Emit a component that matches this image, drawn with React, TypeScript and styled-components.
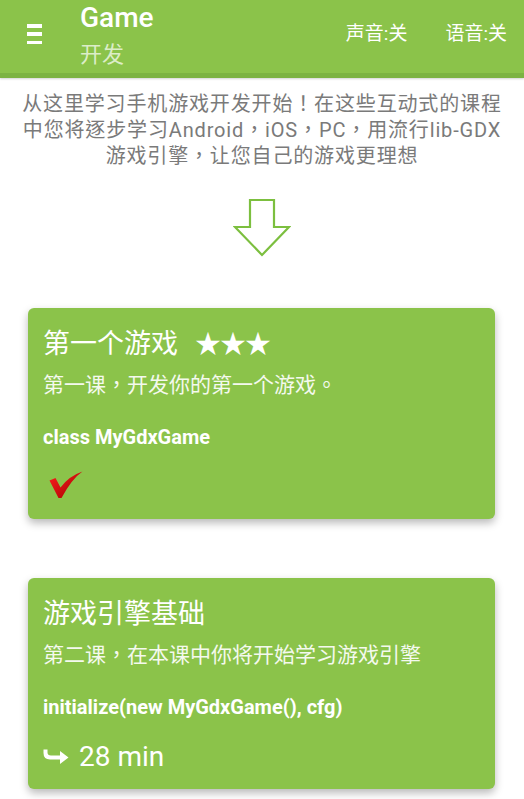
import React from "react";
import styled, { createGlobalStyle } from "styled-components";

const Global = createGlobalStyle`
  html, body { margin: 0; padding: 0; background: #ffffff; }
  body { font-family: Roboto, "Noto Sans CJK TC", sans-serif; }
  * { box-sizing: border-box; }
`;

const GREEN = "#8BC34A";

const Page = styled.div`
  width: 524px;
  min-height: 799px;
  background: #fff;
  overflow: hidden;
`;

const Header = styled.header`
  height: 78px;
  background: ${GREEN};
  border-bottom: 5px solid #7cb342;
  box-shadow: 0 1px 2px rgba(0, 0, 0, 0.18);
  display: flex;
  align-items: flex-start;
  padding-left: 27px;
  padding-right: 17px;
`;

const Burger = styled.div`
  width: 15px;
  height: 20px;
  margin-top: 24px;
  display: flex;
  flex-direction: column;
  justify-content: space-between;
`;

const BurgerBar = styled.span`
  display: block;
  height: 3.5px;
  background: #fff;
`;

const TitleBlock = styled.div`
  margin-left: 38px;
  display: flex;
  flex-direction: column;
  padding-top: 2px;
`;

const AppTitle = styled.div`
  font-family: Roboto, sans-serif;
  font-weight: 500;
  font-size: 28px;
  line-height: 32px;
  color: #fff;
`;

const AppSub = styled.div`
  font-family: "Noto Sans CJK SC", sans-serif;
  font-size: 22px;
  line-height: 28px;
  margin-top: 4px;
  color: #dcedc8;
`;

const HeaderActions = styled.div`
  margin-left: auto;
  display: flex;
  gap: 38px;
  margin-top: 21px;
`;

const HeaderAction = styled.span`
  font-family: Roboto, "Noto Sans CJK SC", sans-serif;
  font-size: 19px;
  line-height: 26px;
  color: #fff;
`;

const Intro = styled.p`
  margin: 13px 0 0;
  text-align: center;
  color: #7a7a7a;
  font-family: Roboto, "Noto Sans CJK TC", sans-serif;
  font-size: 20px;
  letter-spacing: 0.85px;
  line-height: 26px;
`;

const IntroLine = styled.span`
  display: block;
  white-space: nowrap;
`;

const ArrowWrap = styled.div`
  display: flex;
  justify-content: center;
  margin-top: 30px;
  height: 58px;
`;

const CardList = styled.div`
  display: flex;
  flex-direction: column;
  gap: 59px;
  padding: 51px 29px 20px 28px;
`;

const Card = styled.section`
  background: ${GREEN};
  border-radius: 6px;
  box-shadow: 0 4px 8px rgba(0, 0, 0, 0.28);
  padding: 16px 15px 12px;
  color: #fff;
  display: flex;
  flex-direction: column;
`;

const CardTitle = styled.h2`
  margin: 0;
  font-family: "Noto Sans CJK SC", sans-serif;
  font-weight: 400;
  font-size: 27px;
  line-height: 36px;
  display: flex;
  align-items: center;
  gap: 17px;
`;

const Stars = styled.span`
  font-family: "Noto Sans CJK SC", sans-serif;
  font-size: 26px;
  letter-spacing: -1px;
`;

const CardDesc = styled.p`
  margin: 10px 0 0;
  font-family: Roboto, "Noto Sans CJK TC", sans-serif;
  font-size: 21px;
  line-height: 30px;
  color: #f4f9ee;
`;

const CardCode = styled.div`
  margin-top: 22px;
  font-family: Roboto, sans-serif;
  font-weight: 700;
  font-size: 20px;
  line-height: 30px;
`;

const CardFooter = styled.div`
  margin-top: 15px;
  height: 40px;
  display: flex;
  align-items: center;
  gap: 10px;
`;

const Duration = styled.span`
  font-family: Roboto, sans-serif;
  font-size: 28px;
  line-height: 40px;
`;

const DownArrow = () => (
  <svg width="58" height="58" viewBox="0 0 58 58">
    <path
      d="M17 1 H41 V28 H56 L29 56 L2 28 H17 Z"
      fill="#fff"
      stroke="#7cbf3f"
      strokeWidth="2.2"
      strokeLinejoin="miter"
    />
  </svg>
);

const Check = () => (
  <svg width="36" height="28" viewBox="0 0 36 28" style={{ marginLeft: 5, marginTop: -4 }}>
    <defs>
      <linearGradient id="chk" x1="0" y1="0" x2="1" y2="1">
        <stop offset="0" stopColor="#ff1f1f" />
        <stop offset="1" stopColor="#a00000" />
      </linearGradient>
    </defs>
    <path
      d="M1.5 9.5 L7.5 7 L12.5 16.5 Q21 5 34.5 0.5 Q24 7.5 13.5 27 L10.5 27 Z"
      fill="url(#chk)"
    />
  </svg>
);

const CurvedArrow = () => (
  <svg width="26" height="16" viewBox="0 0 26 16">
    <path
      d="M0.5 0.5 H4.5 V3.5 Q4.5 6.5 8 6.5 H17 V2 L25.5 8.5 L17 15 V10.5 H7 Q0.5 10.5 0.5 4 Z"
      fill="#fff"
    />
  </svg>
);

type Lesson = {
  title: string;
  stars?: number;
  desc: string;
  code: string;
  done?: boolean;
  minutes?: number;
};

const lessons: Lesson[] = [
  {
    title: "第一个游戏",
    stars: 3,
    desc: "第一课，开发你的第一个游戏。",
    code: "class MyGdxGame",
    done: true,
  },
  {
    title: "游戏引擎基础",
    desc: "第二课，在本课中你将开始学习游戏引擎",
    code: "initialize(new MyGdxGame(), cfg)",
    minutes: 28,
  },
];

export default function App() {
  return (
    <Page>
      <Global />
      <Header>
        <Burger>
          <BurgerBar />
          <BurgerBar />
          <BurgerBar />
        </Burger>
        <TitleBlock>
          <AppTitle>Game</AppTitle>
          <AppSub>开发</AppSub>
        </TitleBlock>
        <HeaderActions>
          <HeaderAction>声音:关</HeaderAction>
          <HeaderAction>语音:关</HeaderAction>
        </HeaderActions>
      </Header>
      <Intro>
        <IntroLine>从这里学习手机游戏开发开始！在这些互动式的课程</IntroLine>
        <IntroLine>中您将逐步学习Android，iOS，PC，用流行lib-GDX</IntroLine>
        <IntroLine>游戏引擎，让您自己的游戏更理想</IntroLine>
      </Intro>
      <ArrowWrap>
        <DownArrow />
      </ArrowWrap>
      <CardList>
        {lessons.map((l) => (
          <Card key={l.title}>
            <CardTitle>
              {l.title}
              {l.stars ? <Stars>{"★".repeat(l.stars)}</Stars> : null}
            </CardTitle>
            <CardDesc>{l.desc}</CardDesc>
            <CardCode>{l.code}</CardCode>
            <CardFooter>
              {l.done ? <Check /> : null}
              {l.minutes ? (
                <>
                  <CurvedArrow />
                  <Duration>{l.minutes} min</Duration>
                </>
              ) : null}
            </CardFooter>
          </Card>
        ))}
      </CardList>
    </Page>
  );
}
